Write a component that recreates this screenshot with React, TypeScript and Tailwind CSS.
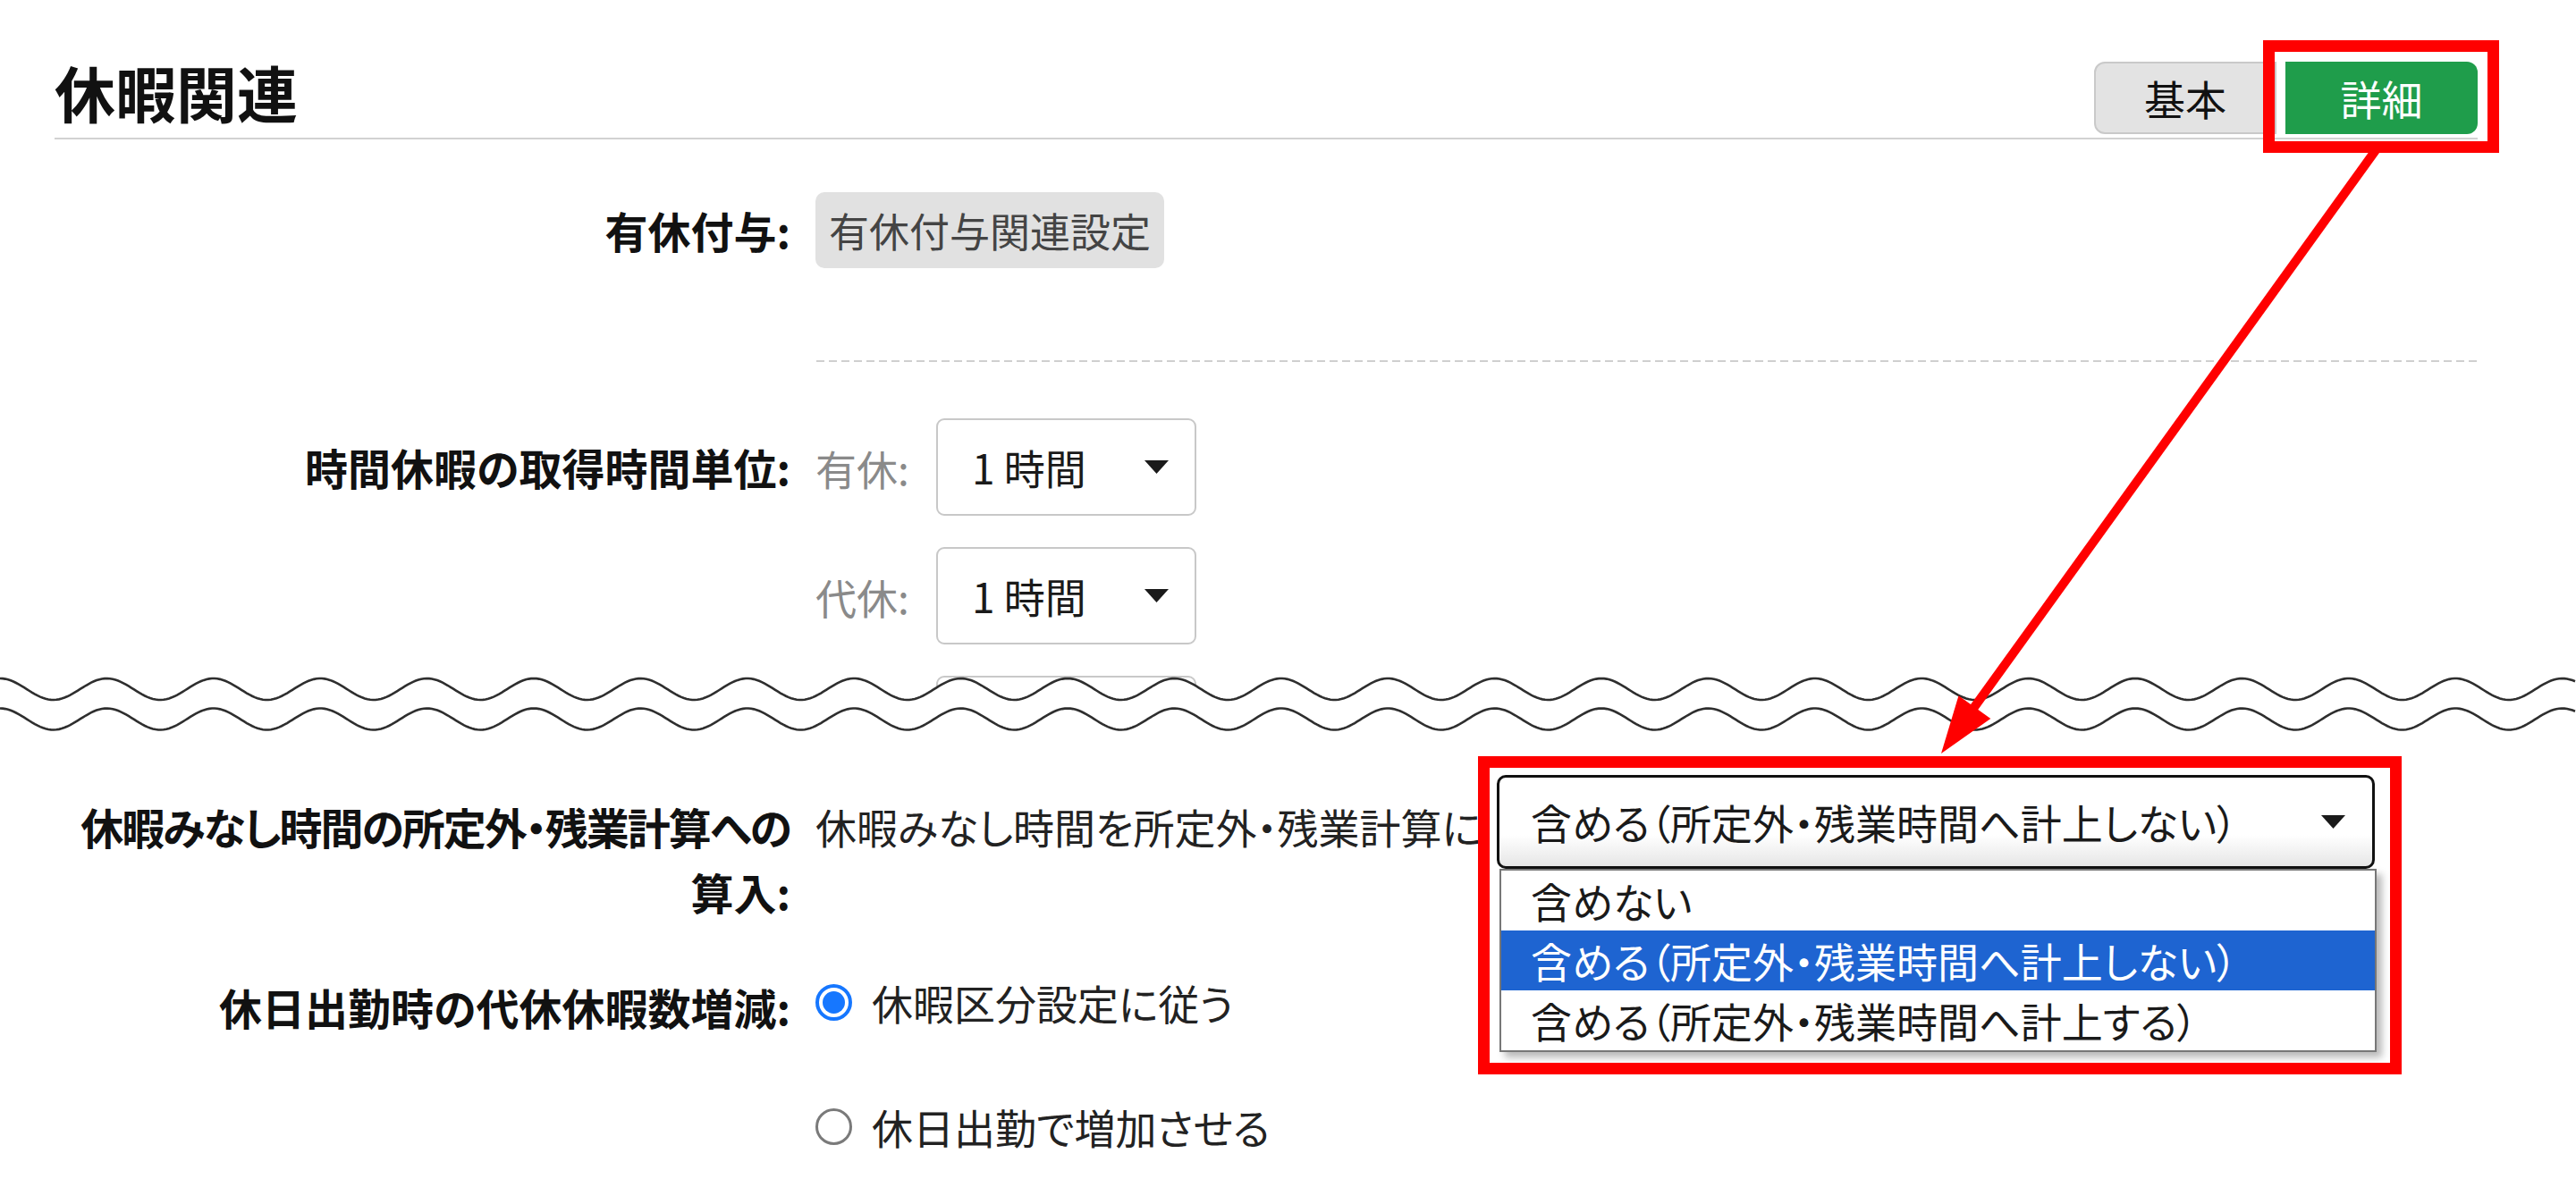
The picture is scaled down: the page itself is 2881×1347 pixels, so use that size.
import type { ReactNode } from "react";

const PAGE_W = 2881;

function wave(cy: number, amp: number, period: number, width: number) {
  const pts: string[] = [];
  for (let x = 0; x <= width; x += 3) {
    const y = cy - amp * Math.cos((2 * Math.PI * x) / period);
    pts.push(`${x === 0 ? "M" : "L"}${x} ${y.toFixed(2)}`);
  }
  return pts.join(" ");
}

function Caret({ className = "" }: { className?: string }) {
  return (
    <svg viewBox="0 0 27 15" className={`h-[15px] w-[27px] ${className}`}>
      <polygon points="0,0 27,0 13.5,15" fill="#1a1a1a" />
    </svg>
  );
}

function Row({
  label,
  children,
  className = "",
}: {
  label: ReactNode;
  children: ReactNode;
  className?: string;
}) {
  return (
    <div className={`grid grid-cols-[823px_1fr] gap-x-[28px] ${className}`}>
      <div className="text-right text-[48px] font-bold whitespace-nowrap text-[#111]">{label}</div>
      <div>{children}</div>
    </div>
  );
}

function HourSelect({ label }: { label?: string }) {
  return (
    <div className="flex items-center gap-[19px]">
      <span className="w-[116px] text-[46px] leading-none text-[#8a8a8a]">{label}</span>
      <div className="flex h-[109px] w-[291px] items-center justify-between rounded-[9px] border-2 border-[#c8c8c8] bg-white pr-[29px] pl-[38px] text-[46px] text-[#1a1a1a]">
        {label && <span>1 時間</span>}
        {label && <Caret />}
      </div>
    </div>
  );
}

function Radio({ checked, children }: { checked?: boolean; children: ReactNode }) {
  return (
    <div className="flex h-[70px] items-center gap-[22px]">
      {checked ? (
        <span className="flex h-[41px] w-[41px] items-center justify-center rounded-full border-4 border-[#1677ff] bg-white">
          <span className="h-[25px] w-[25px] rounded-full bg-[#1677ff]" />
        </span>
      ) : (
        <span className="h-[41px] w-[41px] rounded-full border-[3px] border-[#7a7a7a] bg-white" />
      )}
      <span className="text-[46px] leading-none text-[#222]">{children}</span>
    </div>
  );
}

export default function App() {
  const options = [
    "含めない",
    "含める（所定外・残業時間へ計上しない）",
    "含める（所定外・残業時間へ計上する）",
  ];

  return (
    <div className="relative h-[1347px] w-[2881px] overflow-hidden bg-white font-['Noto_Sans_CJK_JP','Noto_Sans',sans-serif] [font-feature-settings:'palt']">
      {/* upper part, cut by the wave */}
      <div className="h-[790px] overflow-hidden pr-[110px] pl-[61px]">
        <div className="flex items-start justify-between border-b-2 border-[#d2d2d2] pt-[69px] pb-[4px]">
          <h1 className="text-[68px] leading-none font-bold text-[#111]">休暇関連</h1>
          <div className="flex h-[81px]">
            <div className="flex w-[204px] items-center justify-center rounded-l-[12px] border-2 border-[#c9c9c9] bg-[#e3e3e3] text-[46px] text-[#111]">
              基本
            </div>
            <div className="ml-[10px] flex w-[215px] items-center justify-center rounded-r-[12px] bg-[#1f9d4b] text-[46px] text-white">
              詳細
            </div>
          </div>
        </div>

        <Row label={<span className="leading-[85px]">有休付与:</span>} className="mt-[59px]">
          <div className="inline-flex h-[85px] items-center rounded-[10px] bg-[#e1e1e1] px-[15px] text-[45px] text-[#444]">
            有休付与関連設定
          </div>
        </Row>

        <div className="mt-[103px] ml-[852px] h-[2px] bg-[repeating-linear-gradient(to_right,#cfcfcf_0_9px,transparent_9px_14px)]" />

        <Row
          label={<span className="block leading-[109px]">時間休暇の取得時間単位:</span>}
          className="mt-[63px]"
        >
          <div className="flex flex-col gap-[35px]">
            <HourSelect label="有休:" />
            <HourSelect label="代休:" />
            <HourSelect />
          </div>
        </Row>
      </div>

      {/* break marker */}
      <svg
        viewBox={`0 0 ${PAGE_W} 70`}
        className="relative -mt-[40px] block h-[70px] w-[2881px]"
        preserveAspectRatio="none"
      >
        <path d={`${wave(21, 12, 119.4, PAGE_W)} L${PAGE_W} 70 L0 70 Z`} fill="#fff" />
        <path d={wave(21, 12, 119.4, PAGE_W)} fill="none" stroke="#2e2e2e" strokeWidth="2.6" />
        <path d={wave(54.5, 12, 119.4, PAGE_W)} fill="none" stroke="#2e2e2e" strokeWidth="2.6" />
      </svg>

      {/* lower part */}
      <div className="pr-[110px] pl-[61px]">
        <Row
          label={
            <span className="mt-[21px] block leading-[73px]">
              <span className="tracking-[-2px]">休暇みなし時間の所定外・残業計算への</span>
              <br />
              算入:
            </span>
          }
          className="mt-[47px]"
        >
          <div className="flex items-start">
            <span className="mt-[21px] w-[762px] overflow-visible text-[46px] leading-[73px] whitespace-nowrap text-[#222]">
              休暇みなし時間を所定外・残業計算に
            </span>
            <div className="relative h-[105px] w-[982px]">
              <div className="flex h-full items-center justify-between rounded-[10px] border-[3px] border-[#111] bg-gradient-to-b from-white from-65% to-[#e6e6e6] pr-[30px] pl-[35px] text-[46px] text-[#1a1a1a]">
                <span>{options[1]}</span>
                <Caret />
              </div>
              <ul className="absolute top-full left-[3px] w-[981px] border-2 border-[#777] bg-white shadow-[6px_6px_8px_rgba(0,0,0,0.28)]">
                {options.map((o, i) => (
                  <li
                    key={o}
                    className={`flex h-[67px] items-center pl-[33px] text-[46px] ${
                      i === 1 ? "bg-[#1e64d1] text-white" : "text-[#1a1a1a]"
                    }`}
                  >
                    {o}
                  </li>
                ))}
              </ul>
              <div className="pointer-events-none absolute -top-[21px] -left-[21px] h-[356px] w-[1033px] border-[13px] border-[#ff0000]" />
            </div>
          </div>
        </Row>

        <Row
          label={<span className="block pt-[5px] leading-[70px]">休日出勤時の代休休暇数増減:</span>}
          className="mt-[52px]"
        >
          <div className="flex flex-col gap-[69px]">
            <Radio checked>休暇区分設定に従う</Radio>
            <Radio>休日出勤で増加させる</Radio>
          </div>
        </Row>
      </div>

      {/* annotation: box around 詳細 and arrow */}
      <div className="pointer-events-none absolute top-[45px] left-[2531px] h-[126px] w-[264px] border-[13px] border-[#ff0000]" />
      <svg
        viewBox="0 0 2881 1347"
        className="pointer-events-none absolute top-0 left-0 h-[1347px] w-[2881px]"
      >
        <line x1="2657" y1="168" x2="2206" y2="794" stroke="#ff0000" strokeWidth="10" />
        <polygon points="2171,843 2226.3,803.9 2190.5,778.2" fill="#ff0000" />
      </svg>
    </div>
  );
}
